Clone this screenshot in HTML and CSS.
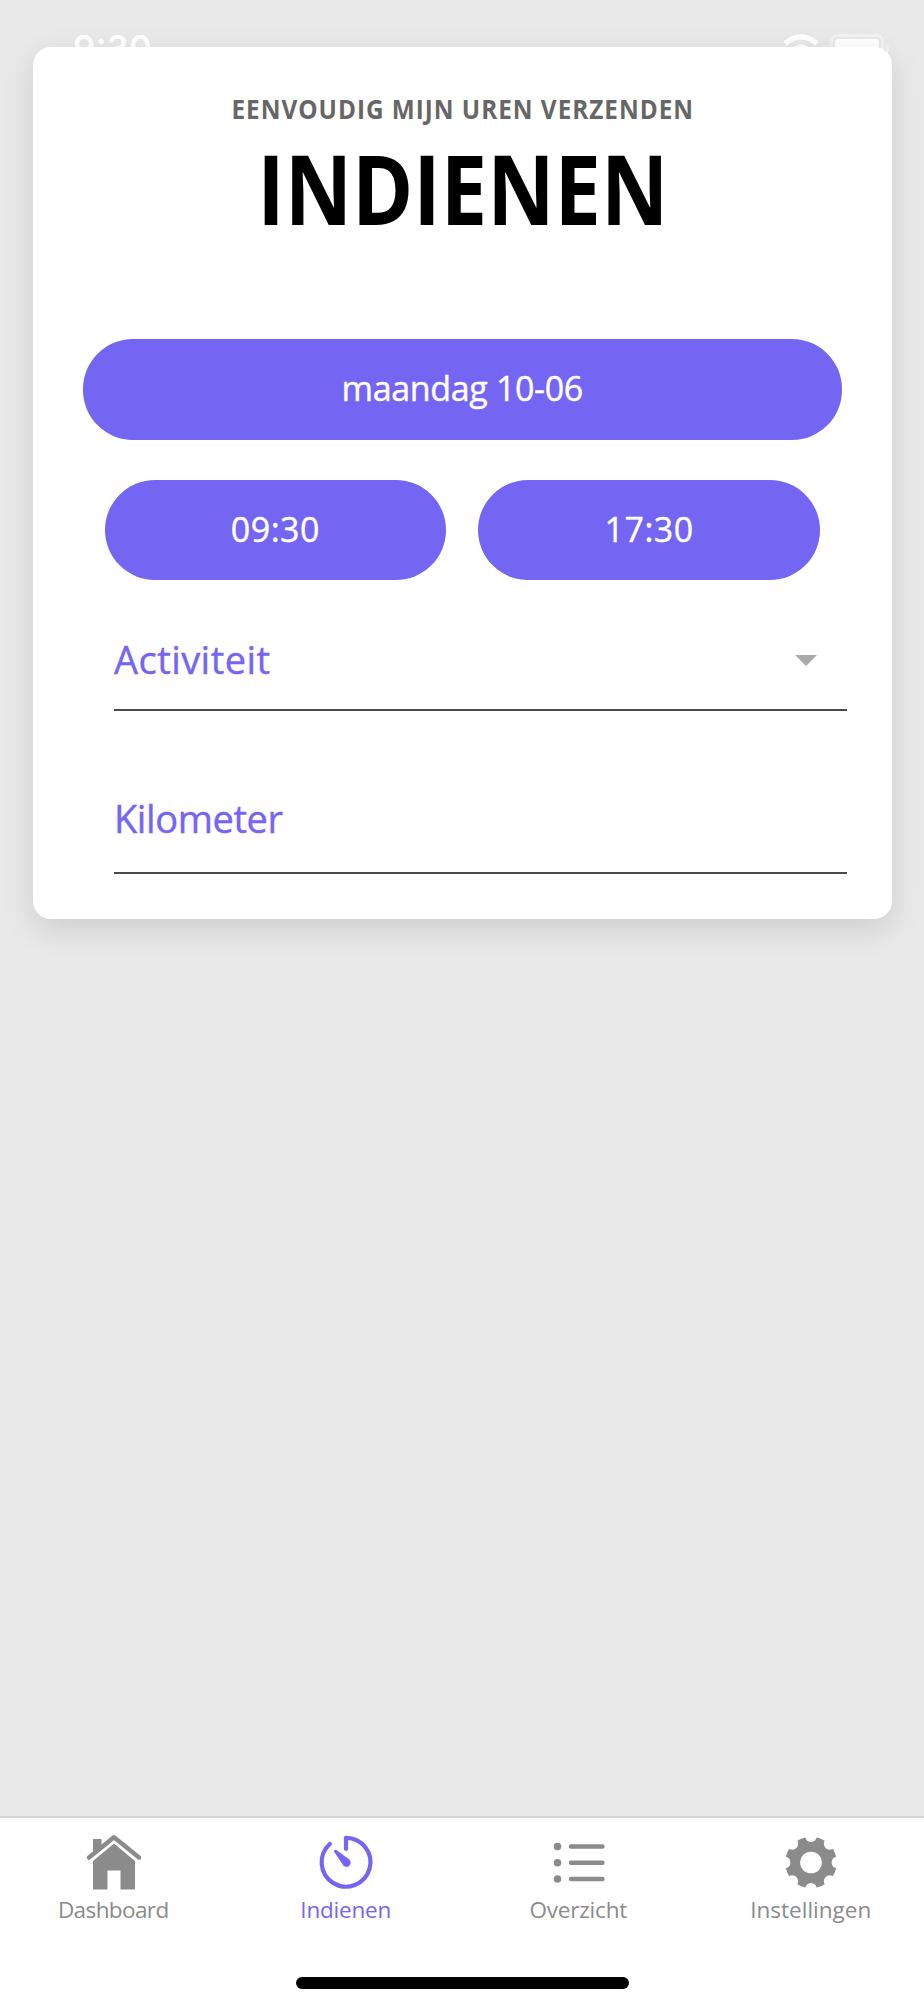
FILE: index.html
```html
<!DOCTYPE html>
<html lang="nl">
<head>
<meta charset="utf-8">
<title>Indienen</title>
<link rel="stylesheet" href="styles.css">
</head>
<body>
<div class="screen">
  <div class="status-bar">
    <span class="clock">9:30</span>
    <svg class="status-icons" width="110" height="34" viewBox="0 0 110 34">
      <path d="M2 9.500Q18-3.500 34 9.500" fill="none" stroke="#fff" stroke-width="5.500"/>
      <path d="M8 15Q18 6 28 15L18 25Z" fill="#fff"/>
      <rect x="48.500" y="1.500" width="51" height="27" rx="6" fill="none" stroke="#f4f4f4" stroke-width="2.500"/>
      <rect x="52" y="5" width="44" height="21" rx="3" fill="#fff"/>
      <path d="M103 10q3 1 3 5t-3 5z" fill="#f4f4f4"/>
    </svg>
  </div>

  <main class="card">
    <p class="subtitle">EENVOUDIG MIJN UREN VERZENDEN</p>
    <h1 class="title">INDIENEN</h1>
    <button class="pill date">maandag 10-06</button>
    <div class="times">
      <button class="pill time">09:30</button>
      <button class="pill time">17:30</button>
    </div>
    <div class="field activity">
      <span class="field-label">Activiteit</span>
      <svg class="caret" width="22" height="11" viewBox="0 0 22 11"><path d="M0 0H22L11 11Z" fill="#aaa"/></svg>
    </div>
    <div class="field distance">
      <span class="field-label">Kilometer</span>
    </div>
  </main>

  <nav class="tab-bar">
    <div class="tabs">
      <a class="tab">
        <svg class="tab-icon" width="60" height="60" viewBox="-1 -1 60 60">
          <path d="M30 9.500L51 27v28.500H36.500V36.500h-13v19H9V27z" fill="#8b8b8b"/>
          <path d="M5 24L30 3.500L55 24" fill="none" stroke="#fff" stroke-width="8"/>
          <path d="M9 5h8.500v8.500L9 20z" fill="#8b8b8b"/>
          <path d="M5 23.500L30 3.300L55 23.500" fill="none" stroke="#8b8b8b" stroke-width="4.400" stroke-linecap="round" stroke-linejoin="round"/>
        </svg>
        <span class="tab-label dashboard">Dashboard</span>
      </a>
      <a class="tab active">
        <svg class="tab-icon" width="60" height="60" viewBox="0 0 60 60">
          <path d="M30 16V4.800A24.400 24.400 0 1 1 13.800 11" fill="none" stroke="#7465f2" stroke-width="4.200" stroke-linecap="round" stroke-linejoin="round"/>
          <path d="M20 16.800Q18.200 16.300 17.900 18.400L26.700 31.500A4.200 4.200 0 1 0 33 26.300Z" fill="#7465f2"/>
        </svg>
        <span class="tab-label submit">Indienen</span>
      </a>
      <a class="tab">
        <svg class="tab-icon" width="60" height="60" viewBox="-1 -1 60 60" fill="#8b8b8b">
          <circle cx="8.500" cy="12.500" r="3.800"/><circle cx="8.500" cy="28.800" r="3.800"/><circle cx="8.500" cy="45" r="3.800"/>
          <path d="M22 12.500H53.500M22 28.800H53.500M22 45H53.500" stroke="#8b8b8b" stroke-width="4.400" stroke-linecap="round"/>
        </svg>
        <span class="tab-label overview">Overzicht</span>
      </a>
      <a class="tab">
        <svg class="tab-icon" width="60" height="60" viewBox="0 -.5 60 60">
          <circle cx="30" cy="29" r="25.800" fill="#8b8b8b"/>
          <g fill="#fff">
            <circle cx="30" cy="29" r="10.800"/>
            <g id="notches">
              <circle cx="30" cy="2.500" r="5.900"/><circle cx="30" cy="55.500" r="5.900"/>
              <circle cx="3.500" cy="29" r="5.900"/><circle cx="56.500" cy="29" r="5.900"/>
            </g>
            <use href="#notches" transform="rotate(45 30 29)"/>
          </g>
        </svg>
        <span class="tab-label settings">Instellingen</span>
      </a>
    </div>
    <div class="home-indicator"></div>
  </nav>
</div>
</body>
</html>
```
FILE: styles.css
```css
* { box-sizing: border-box; }

body {
  margin: 0;
  background: #e9e9e9;
  font-family: "Open Sans", "Noto Sans", sans-serif;
}

.screen {
  height: 2000px;
  display: flex;
  flex-direction: column;
  overflow: hidden;
}

.status-bar {
  height: 47px;
  flex: none;
  display: flex;
  justify-content: space-between;
  padding: 26px 31px 0 73px;
  color: #fff;
}

.clock {
  font: 600 35px/44px Inter, sans-serif;
}

.status-icons {
  margin-top: 8px;
  flex: none;
}

.card {
  position: relative;
  flex: none;
  height: 872px;
  margin: 0 32.500px 0 33px;
  padding: 47px 49.500px 0;
  border-radius: 18px;
  background: #fff;
  box-shadow: 0 10px 32px rgba(0, 0, 0, .12);
}

.subtitle {
  margin: 0;
  font-size: 27px;
  line-height: 30px;
  font-weight: 700;
  letter-spacing: 1.100px;
  text-align: center;
  color: #666;
  white-space: nowrap;
  transform: scaleX(.9);
}

.title {
  margin: 24px 0 0;
  font-size: 96px;
  line-height: 80px;
  font-weight: 700;
  text-align: center;
  color: #000;
  transform: scaleX(.863);
}

.pill {
  display: block;
  border: 0;
  padding: 0;
  border-radius: 50px;
  background: #7465f2;
  color: #fff;
  font: 400 34px/100px "Open Sans", sans-serif;
  -webkit-text-stroke: .4px #fff;
}

.date {
  width: 100%;
  height: 101px;
  margin-top: 111px;
  padding-bottom: 3px;
  line-height: 98px;
  letter-spacing: -.350px;
}

.times {
  display: flex;
  gap: 32px;
  padding: 0 22px;
  margin-top: 40px;
}

.time {
  flex: 1;
  height: 100px;
  padding-bottom: 2px;
  line-height: 98px;
  letter-spacing: .500px;
}

.field {
  display: flex;
  justify-content: space-between;
  align-items: center;
  margin: 0 -4.500px 0 31.500px;
  border-bottom: 2px solid #4a4a4a;
}

.activity { height: 131px; padding: 28px 29.500px 0 0; }
.distance { height: 163px; padding-top: 52px; }

.caret { margin-top: 3px; }

.field-label {
  font-size: 38px;
  color: #7465f2;
  -webkit-text-stroke: .4px #7465f2;
}

.activity .field-label { letter-spacing: .450px; }
.distance .field-label { letter-spacing: -.400px; }

.tab-bar {
  height: 184px;
  flex: none;
  margin-top: auto;
  border-top: 2px solid #d4d4d4;
  background: #fff;
}

.tabs {
  display: grid;
  grid-template-columns: repeat(4, 232.500px);
  margin-left: -3px;
  height: 159px;
}

.tab {
  display: flex;
  flex-direction: column;
  align-items: center;
  padding-top: 15px;
  color: #8b8b8b;
}

.active { color: #7465f2; }

.tab-label {
  font-size: 22.500px;
  line-height: 34px;
}

.dashboard { letter-spacing: -.600px; }
.submit { letter-spacing: -.200px; }
.overview { letter-spacing: -.200px; }
.settings { letter-spacing: 0; }

.home-indicator {
  width: 333px;
  height: 12px;
  margin: 0 auto;
  border-radius: 6px;
  background: #000;
}
```
